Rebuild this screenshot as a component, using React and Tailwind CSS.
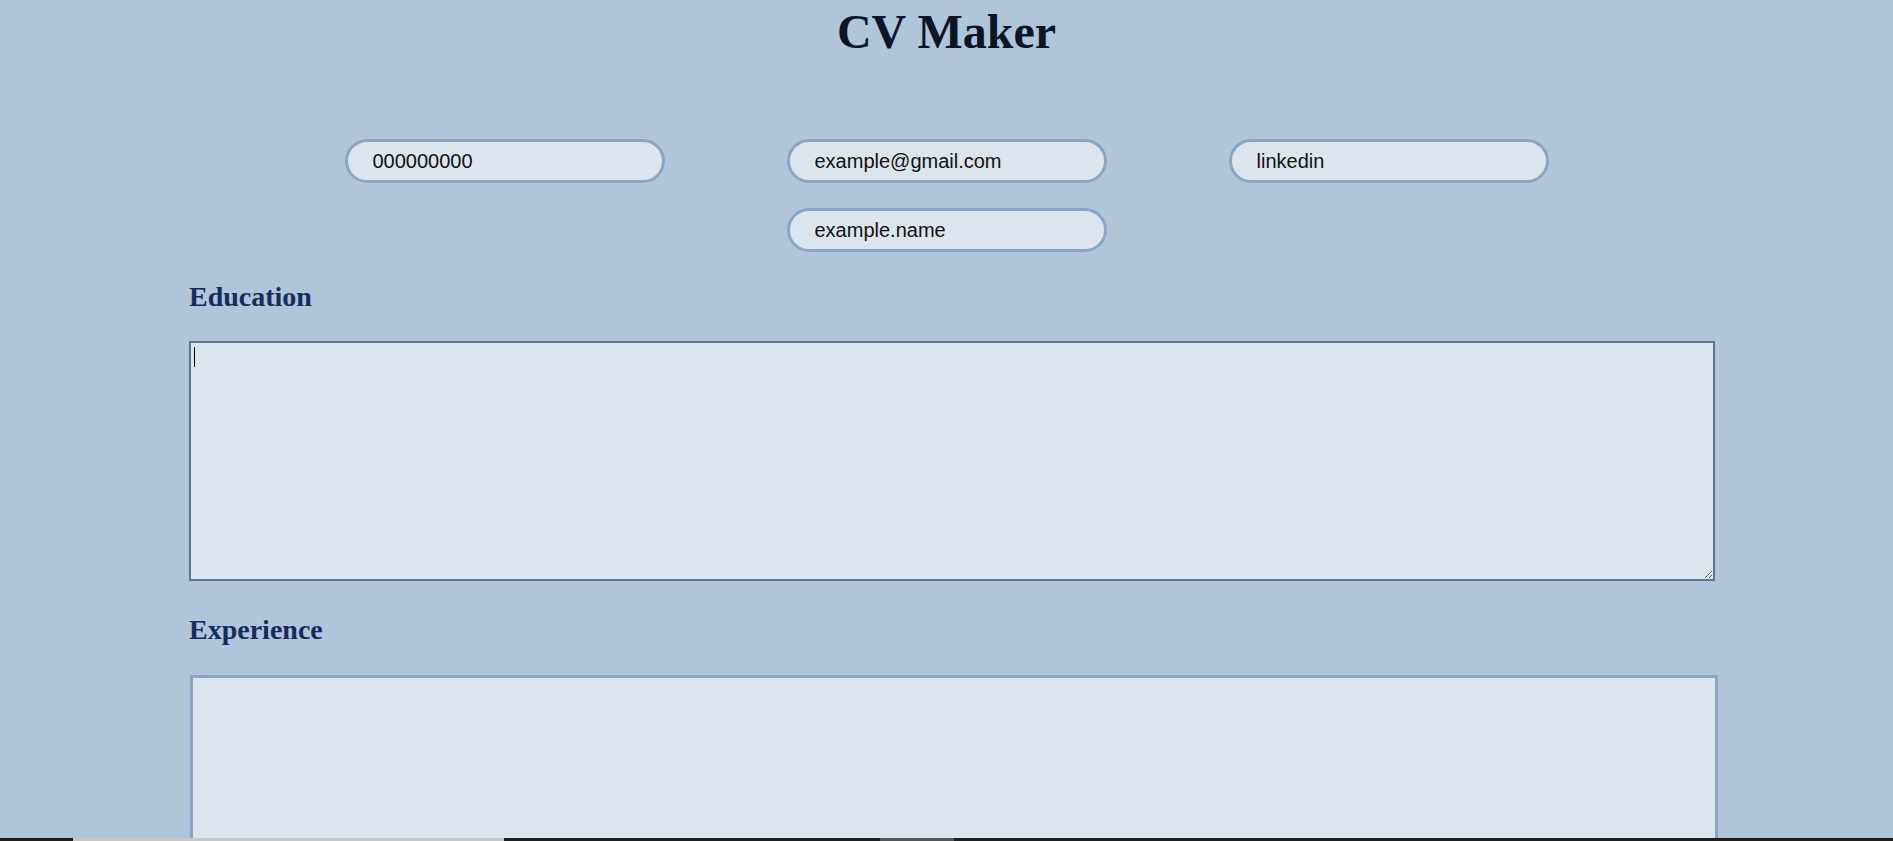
import React from "react";

const serif = { fontFamily: '"Liberation Serif", "Times New Roman", serif' };

const ContactInput = ({ value }) => (
  <input
    type="text"
    defaultValue={value}
    className="w-[320px] h-[44px] rounded-full border-[3px] border-[#88a6c8] bg-[#dce4ed] pl-[25px] pr-4 text-[20px] text-[#111] outline-none font-['Liberation_Sans',Arial,sans-serif]"
  />
);

export default function App() {
  return (
    <div className="min-h-screen bg-[#b0c4da] overflow-hidden">
      {/* Title */}
      <h1
        style={serif}
        className="pt-[5px] text-center text-[48px] leading-[53px] font-bold text-[#0a1628]"
      >
        CV Maker
      </h1>

      {/* Contact fields */}
      <div className="mx-auto mt-[81px] flex w-[1204px] flex-wrap justify-center gap-x-[122px] gap-y-[25px]">
        <ContactInput value="000000000" />
        <ContactInput value="example@gmail.com" />
        <ContactInput value="linkedin" />
        <ContactInput value="example.name" />
      </div>

      <div className="pl-[189px]">
        {/* Education */}
        <h2 style={serif} className="mt-[29px] text-[28px] leading-[31px] font-bold text-[#152d5e]">
          Education
        </h2>
        <div className="relative mt-[29px] w-[1526px]">
          <textarea className="block h-[240px] w-[1526px] border-2 border-[#5b7797] bg-[#dce4ed] outline-none" />
          <span className="absolute left-[5px] top-[6px] h-[20px] w-px bg-black" />
        </div>

        {/* Experience */}
        <h2 style={serif} className="mt-[33px] text-[28px] leading-[31px] font-bold text-[#152d5e]">
          Experience
        </h2>
        <textarea className="mt-[30px] block h-[240px] w-[1528px] ml-px border-[3px] border-[#88a6c8] bg-[#dce4ed] outline-none" />
      </div>

      {/* bottom strip */}
      <div className="fixed bottom-0 left-0 flex h-[3px] w-full bg-[#202020]">
        <div className="ml-[73px] w-[431px] bg-[#c6c6c6]" />
        <div className="ml-[376px] w-[74px] bg-[#555555]" />
      </div>
    </div>
  );
}
